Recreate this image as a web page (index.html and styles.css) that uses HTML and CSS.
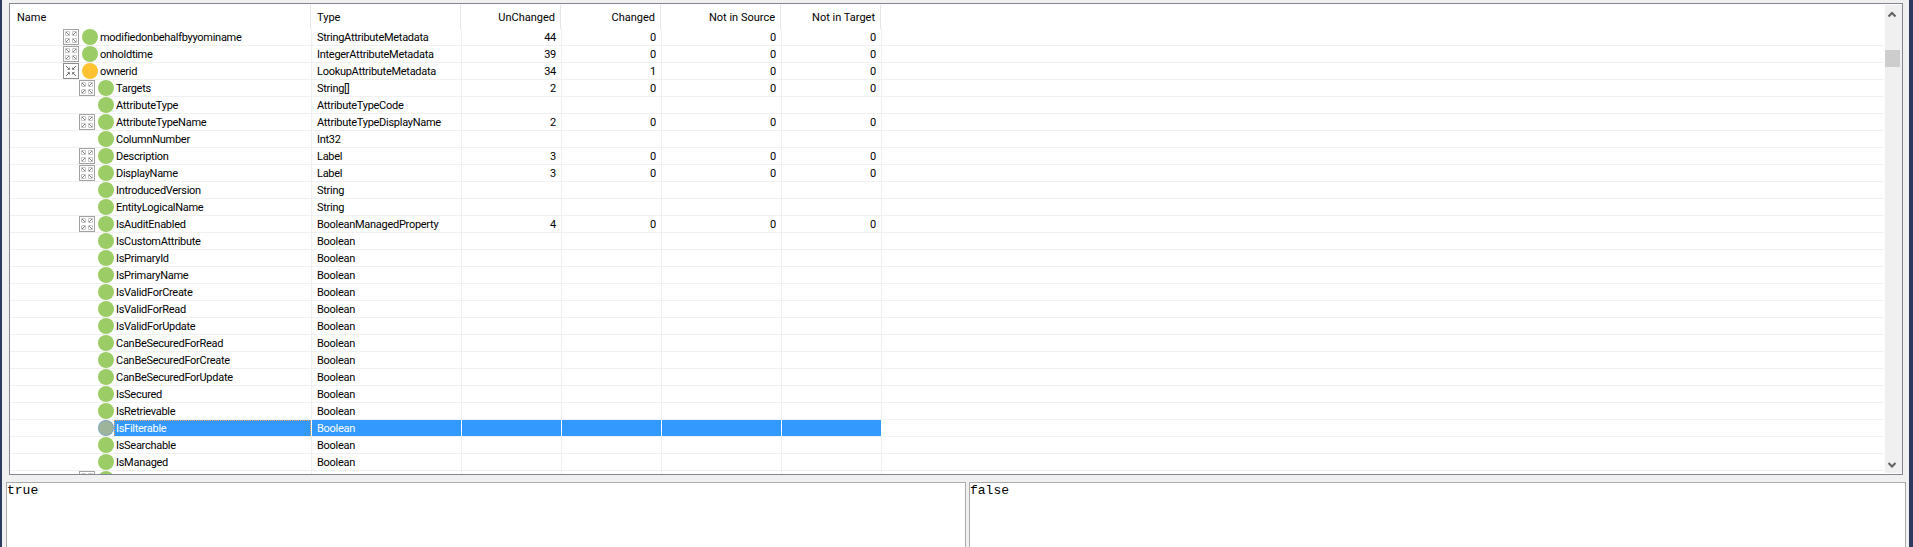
FILE: index.html
```html
<!DOCTYPE html>
<html>
<head>
<meta charset="utf-8">
<title>Metadata compare</title>
<link rel="stylesheet" href="styles.css">
</head>
<body>
<svg class="defs" width="0" height="0">
  <symbol id="closed" viewBox="0 0 16 16">
    <rect x="0.5" y="0.5" width="15" height="15" fill="#fff" stroke="#a2a2a2"/>
    <path d="M2.5 2.5h4v4h-4zM9.5 2.5h4v4h-4zM2.5 9.5h4v4h-4zM9.5 9.5h4v4h-4z" fill="none" stroke="#c8c8c8"/>
    <path d="M3 3l3 3M13 3l-3 3M3 13l3-3M13 13l-3-3" fill="none" stroke="#7f7f7f"/>
  </symbol>
  <symbol id="open" viewBox="0 0 16 16">
    <rect x="0.5" y="0.5" width="15" height="15" fill="#fff" stroke="#8e8e8e"/>
    <path d="M3 3l3.5 3.5M13 3l-3.5 3.5M3 13l3.5-3.5M13 13l-3.5-3.5" fill="none" stroke="#666"/>
    <path d="M4.5 6.5h2v-2M11.5 6.5h-2v-2M4.5 9.5h2v2M11.5 9.5h-2v2" fill="none" stroke="#8a8a8a"/>
  </symbol>
</svg>
<div class="app">
  <div class="tree-panel">
    <div class="tree-body">
      <table class="tree">
        <colgroup>
          <col class="c-name"><col class="c-type"><col class="c-num"><col class="c-num"><col class="c-wide"><col class="c-num"><col>
        </colgroup>
        <thead>
          <tr><th class="h-name">Name</th><th class="h-type">Type</th><th>UnChanged</th><th>Changed</th><th>Not in Source</th><th>Not in Target</th><th class="fill"></th></tr>
        </thead>
        <tbody>
          <tr><td><div class="node l1"><svg class="exp"><use href="#closed"/></svg><i class="dot"></i><span>modifiedonbehalfbyyominame</span></div></td><td>StringAttributeMetadata</td><td>44</td><td>0</td><td>0</td><td>0</td><td class="fill"></td></tr>
          <tr><td><div class="node l1"><svg class="exp"><use href="#closed"/></svg><i class="dot"></i><span>onholdtime</span></div></td><td>IntegerAttributeMetadata</td><td>39</td><td>0</td><td>0</td><td>0</td><td class="fill"></td></tr>
          <tr><td><div class="node l1"><svg class="exp"><use href="#open"/></svg><i class="dot amber"></i><span>ownerid</span></div></td><td>LookupAttributeMetadata</td><td>34</td><td>1</td><td>0</td><td>0</td><td class="fill"></td></tr>
          <tr><td><div class="node l2"><svg class="exp"><use href="#closed"/></svg><i class="dot"></i><span>Targets</span></div></td><td>String[]</td><td>2</td><td>0</td><td>0</td><td>0</td><td class="fill"></td></tr>
          <tr><td><div class="node l3"><i class="dot"></i><span>AttributeType</span></div></td><td>AttributeTypeCode</td><td></td><td></td><td></td><td></td><td class="fill"></td></tr>
          <tr><td><div class="node l2"><svg class="exp"><use href="#closed"/></svg><i class="dot"></i><span>AttributeTypeName</span></div></td><td>AttributeTypeDisplayName</td><td>2</td><td>0</td><td>0</td><td>0</td><td class="fill"></td></tr>
          <tr><td><div class="node l3"><i class="dot"></i><span>ColumnNumber</span></div></td><td>Int32</td><td></td><td></td><td></td><td></td><td class="fill"></td></tr>
          <tr><td><div class="node l2"><svg class="exp"><use href="#closed"/></svg><i class="dot"></i><span>Description</span></div></td><td>Label</td><td>3</td><td>0</td><td>0</td><td>0</td><td class="fill"></td></tr>
          <tr><td><div class="node l2"><svg class="exp"><use href="#closed"/></svg><i class="dot"></i><span>DisplayName</span></div></td><td>Label</td><td>3</td><td>0</td><td>0</td><td>0</td><td class="fill"></td></tr>
          <tr><td><div class="node l3"><i class="dot"></i><span>IntroducedVersion</span></div></td><td>String</td><td></td><td></td><td></td><td></td><td class="fill"></td></tr>
          <tr><td><div class="node l3"><i class="dot"></i><span>EntityLogicalName</span></div></td><td>String</td><td></td><td></td><td></td><td></td><td class="fill"></td></tr>
          <tr><td><div class="node l2"><svg class="exp"><use href="#closed"/></svg><i class="dot"></i><span>IsAuditEnabled</span></div></td><td>BooleanManagedProperty</td><td>4</td><td>0</td><td>0</td><td>0</td><td class="fill"></td></tr>
          <tr><td><div class="node l3"><i class="dot"></i><span>IsCustomAttribute</span></div></td><td>Boolean</td><td></td><td></td><td></td><td></td><td class="fill"></td></tr>
          <tr><td><div class="node l3"><i class="dot"></i><span>IsPrimaryId</span></div></td><td>Boolean</td><td></td><td></td><td></td><td></td><td class="fill"></td></tr>
          <tr><td><div class="node l3"><i class="dot"></i><span>IsPrimaryName</span></div></td><td>Boolean</td><td></td><td></td><td></td><td></td><td class="fill"></td></tr>
          <tr><td><div class="node l3"><i class="dot"></i><span>IsValidForCreate</span></div></td><td>Boolean</td><td></td><td></td><td></td><td></td><td class="fill"></td></tr>
          <tr><td><div class="node l3"><i class="dot"></i><span>IsValidForRead</span></div></td><td>Boolean</td><td></td><td></td><td></td><td></td><td class="fill"></td></tr>
          <tr><td><div class="node l3"><i class="dot"></i><span>IsValidForUpdate</span></div></td><td>Boolean</td><td></td><td></td><td></td><td></td><td class="fill"></td></tr>
          <tr><td><div class="node l3"><i class="dot"></i><span>CanBeSecuredForRead</span></div></td><td>Boolean</td><td></td><td></td><td></td><td></td><td class="fill"></td></tr>
          <tr><td><div class="node l3"><i class="dot"></i><span>CanBeSecuredForCreate</span></div></td><td>Boolean</td><td></td><td></td><td></td><td></td><td class="fill"></td></tr>
          <tr><td><div class="node l3"><i class="dot"></i><span>CanBeSecuredForUpdate</span></div></td><td>Boolean</td><td></td><td></td><td></td><td></td><td class="fill"></td></tr>
          <tr><td><div class="node l3"><i class="dot"></i><span>IsSecured</span></div></td><td>Boolean</td><td></td><td></td><td></td><td></td><td class="fill"></td></tr>
          <tr><td><div class="node l3"><i class="dot"></i><span>IsRetrievable</span></div></td><td>Boolean</td><td></td><td></td><td></td><td></td><td class="fill"></td></tr>
          <tr class="selected"><td><div class="node l3"><i class="dot picked"></i><span>IsFilterable</span></div></td><td>Boolean</td><td></td><td></td><td></td><td></td><td class="fill"></td></tr>
          <tr><td><div class="node l3"><i class="dot"></i><span>IsSearchable</span></div></td><td>Boolean</td><td></td><td></td><td></td><td></td><td class="fill"></td></tr>
          <tr><td><div class="node l3"><i class="dot"></i><span>IsManaged</span></div></td><td>Boolean</td><td></td><td></td><td></td><td></td><td class="fill"></td></tr>
          <tr><td><div class="node l2"><svg class="exp"><use href="#closed"/></svg><i class="dot"></i><span></span></div></td><td></td><td></td><td></td><td></td><td></td><td class="fill"></td></tr>
        </tbody>
      </table>
    </div>
    <div class="scrollbar">
      <svg class="arrow" width="16" height="17" viewBox="0 0 16 17"><path d="M3.5 11.5L7 8l3.5 3.5" fill="none" stroke="#606060" stroke-width="2"/></svg>
      <div class="track"><div class="thumb"></div></div>
      <svg class="arrow" width="16" height="17" viewBox="0 0 16 17"><path d="M3.5 7L7 10.5 10.5 7" fill="none" stroke="#606060" stroke-width="2"/></svg>
    </div>
  </div>
  <div class="values">
    <pre class="value left">true</pre>
    <pre class="value">false</pre>
  </div>
</div>
</body>
</html>
```

FILE: styles.css
```css
html, body { margin: 0; padding: 0; height: 100%; overflow: hidden; }
body { background: #f0f0f0; font-family: Roboto, sans-serif; font-size: 11px; color: #000; }
.defs { display: block; height: 0; position: absolute; }

.app { height: 547px; box-sizing: border-box; padding: 3px 3px 0 2px; display: flex; flex-direction: column; background: #f0f0f0; border-right: 4px solid #2b3a5e; box-shadow: inset 2px 0 0 #2b3a5e; }

.tree-panel { height: 472px; flex: none; box-sizing: border-box; margin: 0 3px 0 7px; border: 1px solid #828790; background: #fff; display: flex; }
.tree-body { flex: 1; min-width: 0; overflow: hidden; padding-top: 1px; margin-right: 1px; }
.tree { border-collapse: separate; border-spacing: 0; table-layout: fixed; width: 100%; }
.c-name { width: 302px; }
.c-type { width: 150px; }
.c-num { width: 100px; }
.c-wide { width: 120px; }

.tree th { height: 24px; padding: 0 6px 0 0; font-weight: normal; text-align: right; border-right: 1px solid #fff; box-shadow: inset -1px 0 0 #e5e5e5; background: #fff; }
.tree th.h-name { text-align: left; padding-left: 7px; }
.tree th.h-type { text-align: left; padding-left: 5px; }
.tree td { height: 16px; padding: 0 5px 0 0; text-align: right; white-space: nowrap; overflow: hidden; letter-spacing: -0.28px; border-right: 1px solid #f0f0f0; border-bottom: 1px solid #f0f0f0; }
.tree td:first-child { text-align: left; padding: 0; }
.tree td:nth-child(2) { text-align: left; padding-left: 5px; }
.tree .fill { border-right: 0; box-shadow: none; }

.node { display: flex; align-items: center; height: 16px; }
.node.l1 { padding-left: 53px; }
.node.l2 { padding-left: 69px; }
.node.l3 { padding-left: 88px; }
.exp { width: 16px; height: 16px; margin-right: 3px; flex: none; }
.dot { width: 16px; height: 16px; box-sizing: border-box; border-radius: 50%; background: #9ccc65; flex: none; margin-right: 2px; }
.dot.amber { background: #ffc233; }
.dot.picked { background: #9db39a; border: 1px dotted #5b9be8; }

.selected td { background: #3399ff; color: #fff; border-right-color: #fff; }
.selected td:first-child { background: #fff; }
.selected td.fill { background: #fff; border-bottom-color: #f0f0f0; }
.selected .node span { background: #3399ff; flex: 1; height: 17px; line-height: 17px; margin-left: -2px; padding-left: 2px; outline: 1px dotted #f7a35c; outline-offset: -1px; }

.scrollbar { width: 17px; margin: 1px 0; display: flex; flex-direction: column; background: #f0f0f0; }
.arrow { display: block; flex: none; }
.track { flex: 1; }
.thumb { height: 17px; width: 15px; margin-top: 28px; background: #cdcdcd; }

.values { display: flex; gap: 3px; margin-top: 7px; flex: 1; padding-left: 4px; }
.value { flex: 1; margin: 0; border: 1px solid #ababab; border-bottom: 0; background: #fff; font-family: "Liberation Mono", monospace; font-size: 13px; line-height: 15px; padding: 0 1px 0 0; }
.value.left { flex: none; width: 957px; }
```
